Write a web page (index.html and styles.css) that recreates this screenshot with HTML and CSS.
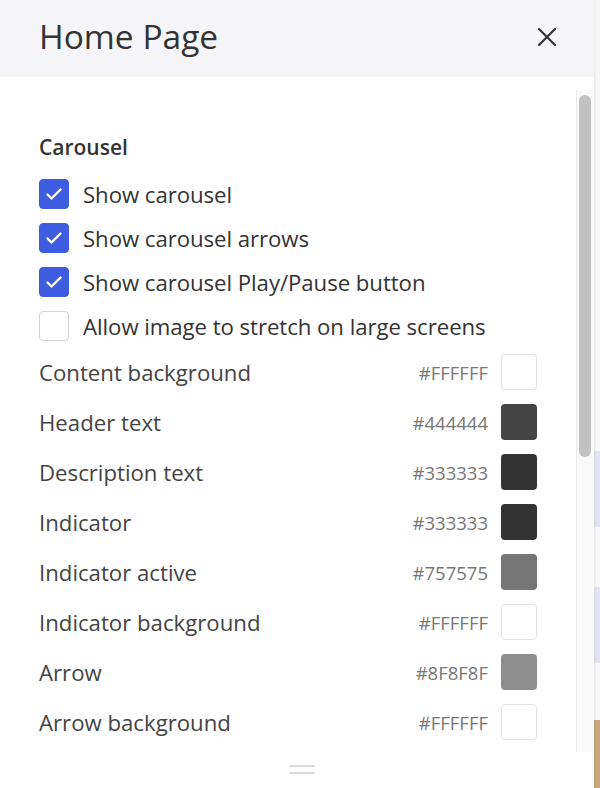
FILE: index.html
```html
<!DOCTYPE html>
<html>
<head>
<meta charset="utf-8">
<link rel="stylesheet" href="styles.css">
</head>
<body>
<div class="page">
  <div class="panel">
    <header class="panel-header">
      <h1 class="title">Home Page</h1>
      <button class="close" aria-label="Close">
        <svg width="20" height="20" viewBox="0 0 20 20"><path d="M2 2 L18 18 M18 2 L2 18" stroke="#333" stroke-width="2.2" stroke-linecap="round" fill="none"/></svg>
      </button>
    </header>
    <div class="panel-body">
      <div class="content">
        <div class="section-title">Carousel</div>
        <label class="check-row"><span class="box checked"><svg width="18" height="14" viewBox="0 0 18 14"><path d="M2.5 7.5 L6.5 11.5 L15.5 2.5" stroke="#fff" stroke-width="2.4" fill="none" stroke-linecap="round" stroke-linejoin="round"/></svg></span><span class="check-label">Show carousel</span></label>
        <label class="check-row"><span class="box checked"><svg width="18" height="14" viewBox="0 0 18 14"><path d="M2.5 7.5 L6.5 11.5 L15.5 2.5" stroke="#fff" stroke-width="2.4" fill="none" stroke-linecap="round" stroke-linejoin="round"/></svg></span><span class="check-label">Show carousel arrows</span></label>
        <label class="check-row"><span class="box checked"><svg width="18" height="14" viewBox="0 0 18 14"><path d="M2.5 7.5 L6.5 11.5 L15.5 2.5" stroke="#fff" stroke-width="2.4" fill="none" stroke-linecap="round" stroke-linejoin="round"/></svg></span><span class="check-label">Show carousel Play/Pause button</span></label>
        <label class="check-row"><span class="box"></span><span class="check-label">Allow image to stretch on large screens</span></label>

        <div class="colors">
          <div class="color-row"><span class="color-label">Content background</span><span class="hex">#FFFFFF</span><span class="swatch light" style="background:#FFFFFF"></span></div>
          <div class="color-row"><span class="color-label">Header text</span><span class="hex">#444444</span><span class="swatch" style="background:#444444"></span></div>
          <div class="color-row"><span class="color-label">Description text</span><span class="hex">#333333</span><span class="swatch" style="background:#333333"></span></div>
          <div class="color-row"><span class="color-label">Indicator</span><span class="hex">#333333</span><span class="swatch" style="background:#333333"></span></div>
          <div class="color-row"><span class="color-label">Indicator active</span><span class="hex">#757575</span><span class="swatch" style="background:#757575"></span></div>
          <div class="color-row"><span class="color-label">Indicator background</span><span class="hex">#FFFFFF</span><span class="swatch light" style="background:#FFFFFF"></span></div>
          <div class="color-row"><span class="color-label">Arrow</span><span class="hex">#8F8F8F</span><span class="swatch" style="background:#8F8F8F"></span></div>
          <div class="color-row"><span class="color-label">Arrow background</span><span class="hex">#FFFFFF</span><span class="swatch light" style="background:#FFFFFF"></span></div>
        </div>
      </div>
      <div class="scroll-track"><div class="scroll-thumb"></div></div>
    </div>
    <div class="handle"><span></span><span></span></div>
  </div>
  <div class="backdrop">
    <span class="bd bd1"></span>
    <span class="bd bd2"></span>
    <span class="bd bd3"></span>
    <span class="bd bd4"></span>
    <span class="bd bd5"></span>
  </div>
</div>
</body>
</html>
```

FILE: styles.css
```css
* { box-sizing: border-box; }
html, body { margin: 0; padding: 0; }
body {
  width: 600px;
  height: 788px;
  overflow: hidden;
  background: #f4f4f6;
  font-family: "Open Sans", "Noto Sans", sans-serif;
  color: #333;
}
.page {
  display: flex;
  width: 600px;
  height: 788px;
}
.panel {
  width: 594px;
  height: 788px;
  display: flex;
  flex-direction: column;
  background: #fff;
  box-shadow: 0 0 3px rgba(0,0,0,0.12);
  position: relative;
  z-index: 1;
}
.panel-header {
  height: 77px;
  flex: none;
  background: #f6f6f9;
  display: flex;
  align-items: center;
  justify-content: space-between;
  padding: 0 37px 0 39px;
}
.title {
  margin: 0;
  font-size: 33.5px;
  font-weight: 400;
  color: #333;
  line-height: 1;
  padding-bottom: 4px;
}
.close {
  border: 0;
  background: none;
  padding: 0;
  width: 20px;
  height: 20px;
  margin-bottom: 3px;
  display: flex;
}
.panel-body {
  flex: 1;
  display: flex;
  min-height: 0;
  padding-top: 13px;
}
.content {
  flex: 1;
  padding: 42px 39px 0 39px;
}
.section-title {
  height: 30px;
  display: flex;
  align-items: center;
  font-size: 21px;
  font-weight: 600;
  color: #333;
  margin-bottom: 10px;
}
.check-row {
  height: 44px;
  display: flex;
  align-items: center;
  gap: 14px;
}
.box {
  width: 30px;
  height: 30px;
  border-radius: 4px;
  border: 1px solid #d4d4d4;
  background: #fff;
  display: flex;
  align-items: center;
  justify-content: center;
  flex: none;
}
.box.checked {
  background: #3d5ce0;
  border-color: #3d5ce0;
}
.check-label {
  font-size: 22.2px;
  color: #333;
  white-space: nowrap;
  letter-spacing: -0.05px;
}
.colors {
  margin-top: -1px;
}
.color-row {
  height: 50px;
  display: flex;
  align-items: center;
}
.color-label {
  flex: 1;
  font-size: 22.2px;
  color: #444;
}
.hex {
  font-size: 18.5px;
  color: #777;
  margin-right: 13px;
}
.swatch {
  width: 36px;
  height: 36px;
  border-radius: 4px;
  flex: none;
}
.swatch.light {
  border: 1px solid #e2e2e2;
}
.scroll-track {
  width: 16px;
  height: 662px;
  flex: none;
  background: #fafafa;
  border-left: 1px solid #ececec;
  padding: 5px 1px 0 2px;
  margin-right: 2px;
}
.scroll-thumb {
  height: 362px;
  background: #c1c1c1;
  border-radius: 6px;
}
.handle {
  position: absolute;
  left: 289px;
  top: 765px;
  width: 26px;
  display: flex;
  flex-direction: column;
  gap: 5px;
}
.handle span {
  height: 2px;
  background: #dcdcdc;
  border-radius: 1px;
}
.backdrop {
  flex: 1;
  display: flex;
  flex-direction: column;
  background: #f7f7f9;
}
.bd { display: block; }
.bd1 { height: 451px; background: #f7f7f8; }
.bd2 { height: 76px; background: #e3e3f4; }
.bd3 { height: 60px; background: #f7f7f9; }
.bd4 { height: 76px; background: #e3e3f4; }
.bd5 { flex: 1; background: #c9a77f; margin-top: 57px; }
```
